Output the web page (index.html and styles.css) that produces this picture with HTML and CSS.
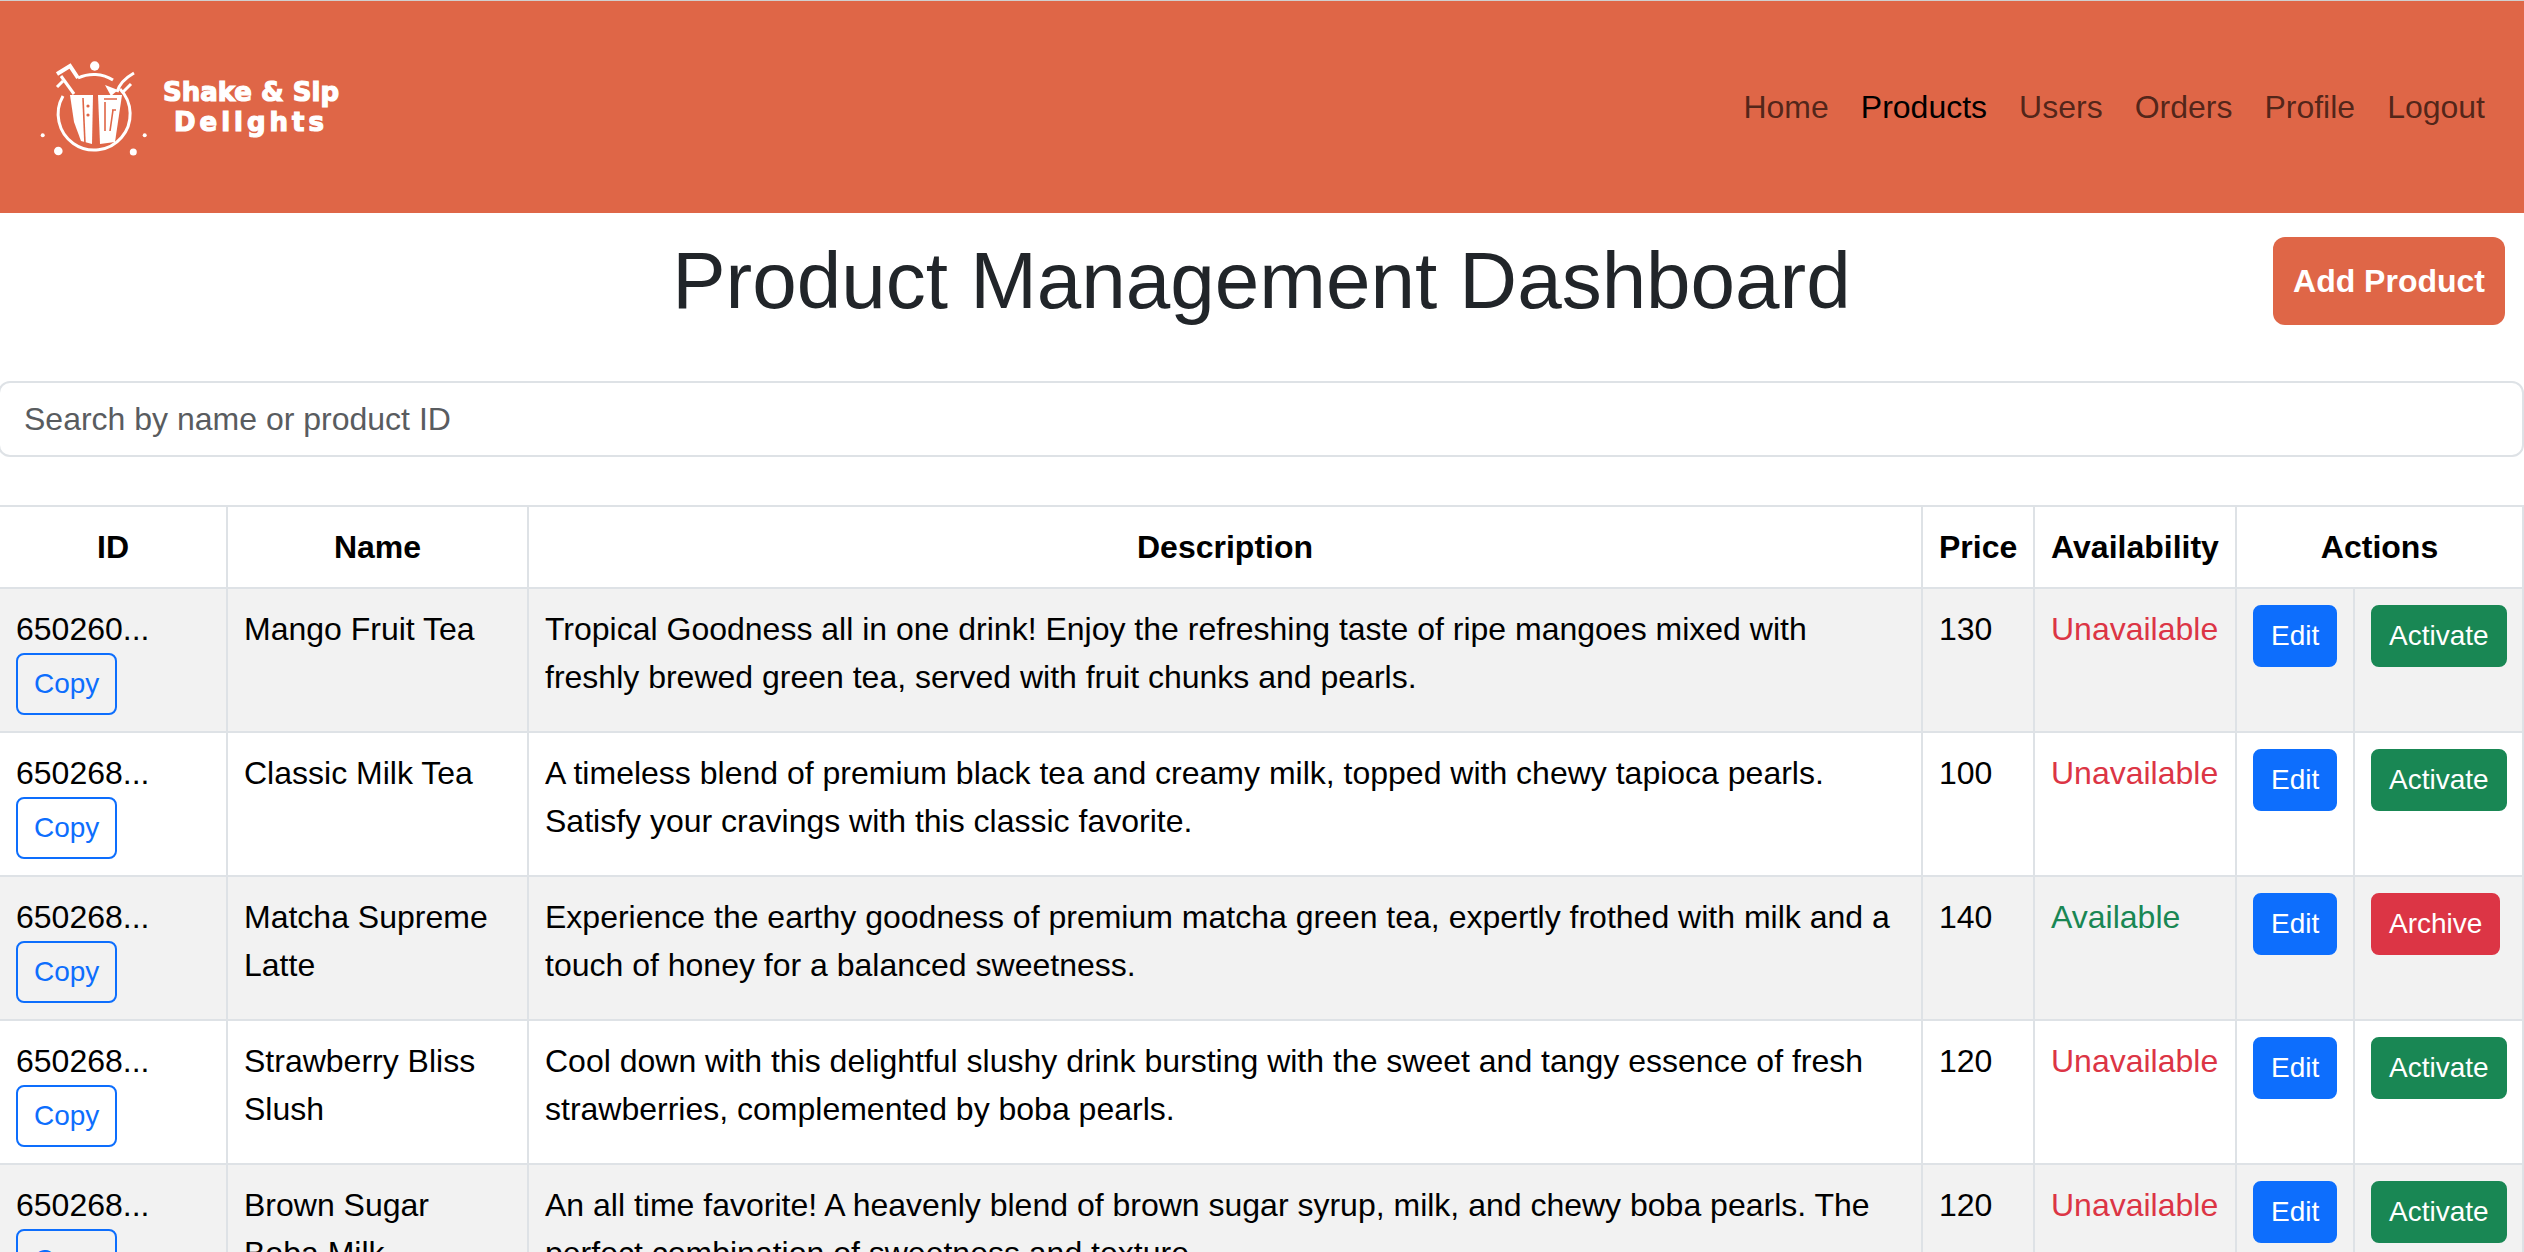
FILE: index.html
```html
<!DOCTYPE html>
<html lang="en">

<head>
  <meta charset="UTF-8" />
  <meta name="viewport" content="width=device-width, initial-scale=1.0" />
  <title>Product Management Dashboard</title>
  <link rel="stylesheet" href="styles.css">
</head>

<body>
  <nav class="navbar">
    <a class="brand" href="#">
      <svg class="brand-icon" viewBox="0 0 130 110" width="130" height="110" aria-hidden="true">
        <!-- ring -->
        <path class="line" d="M48 26 A36 36 0 0 1 83 28" />
        <path class="line" d="M90 37 A36 36 0 1 1 33 44" />
        <!-- left straw -->
        <path class="line thick" d="M27 22 L40 14 L48 26" />
        <path class="line" d="M31 24 L44 42" />
        <path class="line" d="M27 35 L33 29" />
        <!-- right straw and leaf -->
        <path class="line" d="M87 40 Q90 29 104 21" />
        <path class="line" d="M93 40 L101 32" />
        <polygon class="fill" points="75,33 88,38 81,44" />
        <!-- cups -->
        <polygon class="fill" points="40,43 63,43 62,92 51,89 44,70" />
        <polygon class="fill" points="68,43 92,43 85,90 70,92" />
        <path class="cut" d="M53 46 L55 92" />
        <path class="cut" d="M74 47 H87 M75 50 V79 M82 58 H86 M83 58 L80 79" />
        <circle class="dot" cx="58" cy="54" r="1.6" />
        <circle class="dot" cx="58" cy="63" r="1.6" />
        <!-- sparkles -->
        <circle class="spot" cx="64.7" cy="14" r="4.7" />
        <circle class="spot" cx="28.3" cy="99" r="4.3" />
        <circle class="spot" cx="103.3" cy="100" r="3.5" />
        <circle class="spot" cx="12.7" cy="83.3" r="2" />
        <circle class="spot" cx="114.7" cy="83.3" r="2" />
      </svg>
      <span class="brand-text">
        <span class="brand-top">Shake &amp; Sip</span>
        <span class="brand-bottom">Delights</span>
      </span>
    </a>
    <ul class="nav-links">
      <li><a href="#">Home</a></li>
      <li><a class="active" href="#">Products</a></li>
      <li><a href="#">Users</a></li>
      <li><a href="#">Orders</a></li>
      <li><a href="#">Profile</a></li>
      <li><a href="#">Logout</a></li>
    </ul>
  </nav>

  <main>
    <div class="title-row">
      <h1>Product Management Dashboard</h1>
      <button class="add-btn">Add Product</button>
    </div>

    <input class="search" type="text" placeholder="Search by name or product ID" />

    <table class="products">
      <colgroup>
        <col class="col-id">
        <col class="col-name">
        <col class="col-desc">
        <col class="col-price">
        <col class="col-avail">
        <col class="col-edit">
        <col class="col-toggle">
      </colgroup>
      <thead>
        <tr>
          <th>ID</th>
          <th>Name</th>
          <th>Description</th>
          <th>Price</th>
          <th>Availability</th>
          <th colspan="2">Actions</th>
        </tr>
      </thead>
      <tbody>
        <tr>
          <td>650260...<button class="btn btn-copy">Copy</button></td>
          <td>Mango Fruit Tea</td>
          <td>Tropical Goodness all in one drink! Enjoy the refreshing taste of ripe mangoes mixed with freshly brewed green tea, served with fruit chunks and pearls.</td>
          <td>130</td>
          <td class="no">Unavailable</td>
          <td><button class="btn btn-edit">Edit</button></td>
          <td><button class="btn btn-activate">Activate</button></td>
        </tr>
        <tr>
          <td>650268...<button class="btn btn-copy">Copy</button></td>
          <td>Classic Milk Tea</td>
          <td>A timeless blend of premium black tea and creamy milk, topped with chewy tapioca pearls. Satisfy your cravings with this classic favorite.</td>
          <td>100</td>
          <td class="no">Unavailable</td>
          <td><button class="btn btn-edit">Edit</button></td>
          <td><button class="btn btn-activate">Activate</button></td>
        </tr>
        <tr>
          <td>650268...<button class="btn btn-copy">Copy</button></td>
          <td>Matcha Supreme Latte</td>
          <td>Experience the earthy goodness of premium matcha green tea, expertly frothed with milk and a touch of honey for a balanced sweetness.</td>
          <td>140</td>
          <td class="yes">Available</td>
          <td><button class="btn btn-edit">Edit</button></td>
          <td><button class="btn btn-archive">Archive</button></td>
        </tr>
        <tr>
          <td>650268...<button class="btn btn-copy">Copy</button></td>
          <td>Strawberry Bliss Slush</td>
          <td>Cool down with this delightful slushy drink bursting with the sweet and tangy essence of fresh strawberries, complemented by boba pearls.</td>
          <td>120</td>
          <td class="no">Unavailable</td>
          <td><button class="btn btn-edit">Edit</button></td>
          <td><button class="btn btn-activate">Activate</button></td>
        </tr>
        <tr>
          <td>650268...<button class="btn btn-copy">Copy</button></td>
          <td>Brown Sugar Boba Milk</td>
          <td>An all time favorite! A heavenly blend of brown sugar syrup, milk, and chewy boba pearls. The perfect combination of sweetness and texture.</td>
          <td>120</td>
          <td class="no">Unavailable</td>
          <td><button class="btn btn-edit">Edit</button></td>
          <td><button class="btn btn-activate">Activate</button></td>
        </tr>
      </tbody>
    </table>
  </main>
</body>

</html>
```

FILE: styles.css
```css
html,
body {
  height: 100vh;
  overflow: hidden;
}

body {
  margin: 0;
  font-family: "Liberation Sans", Arial, sans-serif;
  font-size: 32px;
  line-height: 48px;
  color: #212529;
  background-color: #fff;
}

/* navbar */
.navbar {
  display: flex;
  justify-content: space-between;
  align-items: center;
  box-sizing: border-box;
  height: 213px;
  padding-right: 23px;
  background-color: #df6647;
  border-top: 1px solid #d0d0d0;
}

.brand {
  display: flex;
  align-items: center;
  padding-left: 30px;
  color: #fff;
  text-decoration: none;
}

.brand-icon {
  display: block;
}

.brand-icon .line {
  fill: none;
  stroke: #fff;
  stroke-width: 3;
}

.brand-icon .thick {
  stroke-width: 4;
}

.brand-icon .fill,
.brand-icon .spot {
  fill: #fff;
}

.brand-icon .cut {
  fill: none;
  stroke: #df6647;
  stroke-width: 1.6;
}

.brand-icon .dot {
  fill: #df6647;
}

.brand-text {
  display: flex;
  flex-direction: column;
  align-items: center;
  width: 190px;
  margin-left: -4px;
  font-family: "DejaVu Sans", sans-serif;
  font-weight: 700;
  font-size: 26px;
  line-height: 30px;
  white-space: nowrap;
  -webkit-text-stroke: 1.2px #fff;
}

.brand-bottom {
  letter-spacing: 4px;
}

.nav-links {
  display: flex;
  margin: 0;
  padding: 0;
  list-style: none;
}

.nav-links a {
  display: block;
  padding: 16px;
  color: rgba(0, 0, 0, 0.65);
  text-decoration: none;
}

.nav-links a.active {
  color: #000;
}

/* title + search */
.title-row {
  display: grid;
  grid-template-columns: 1fr auto 1fr;
  align-items: start;
  padding: 0 19px 0 18px;
}

.title-row h1 {
  grid-column: 2;
  margin: 0;
  padding-top: 20px;
  font-size: 80px;
  font-weight: 400;
  line-height: 96px;
}

.add-btn {
  grid-column: 3;
  justify-self: end;
  margin-top: 24px;
  padding: 20px;
  font-family: inherit;
  font-size: 32px;
  font-weight: 700;
  line-height: 48px;
  color: #fff;
  background-color: #df6647;
  border: 0;
  border-radius: 12px;
}

.search {
  display: block;
  box-sizing: border-box;
  width: calc(100% + 2px);
  height: 76px;
  margin: 52px 0 48px -2px;
  padding: 12px 24px;
  font-family: inherit;
  font-size: 32px;
  line-height: 48px;
  color: #212529;
  background-color: #fff;
  border: 2px solid #dee2e6;
  border-radius: 12px;
}

.search::placeholder {
  color: #595c5f;
}

/* table */
.products {
  width: 2524px;
  table-layout: fixed;
  border-collapse: separate;
  border-spacing: 0;
  color: #000;
}

.col-id { width: 228px; }
.col-name { width: 301px; }
.col-desc { width: 1394px; }
.col-price { width: 112px; }
.col-avail { width: 202px; }
.col-edit { width: 118px; }
.col-toggle { width: 169px; }

.products th,
.products td {
  padding: 16px;
  text-align: left;
  vertical-align: top;
  border-right: 2px solid #dee2e6;
  border-bottom: 2px solid #dee2e6;
}

.products th {
  text-align: center;
  white-space: nowrap;
  border-top: 2px solid #dee2e6;
}

.products tbody tr:nth-child(odd) td {
  background-color: #f2f2f2;
}

.products .no {
  color: #dc3545;
}

.products .yes {
  color: #198754;
}

/* small buttons */
.btn {
  display: block;
  padding: 8px 16px;
  font-family: inherit;
  font-size: 28px;
  line-height: 42px;
  color: #fff;
  border: 2px solid transparent;
  border-radius: 8px;
}

.btn-copy {
  color: #0d6efd;
  background-color: transparent;
  border-color: #0d6efd;
}

.btn-edit {
  background-color: #0d6efd;
  border-color: #0d6efd;
}

.btn-activate {
  background-color: #198754;
  border-color: #198754;
}

.btn-archive {
  background-color: #dc3545;
  border-color: #dc3545;
}
```
